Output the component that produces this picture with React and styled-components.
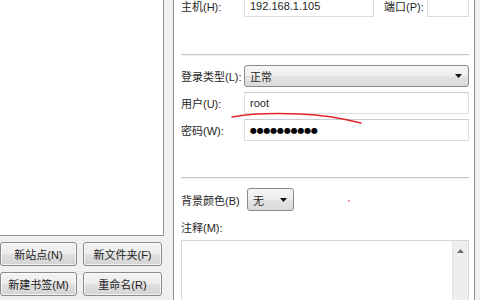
import React from "react";
import styled, { createGlobalStyle } from "styled-components";

const GlobalStyle = createGlobalStyle`
  html, body {
    margin: 0;
    padding: 0;
    background: #f0f0f0;
  }
  * {
    box-sizing: border-box;
  }
`;

const Page = styled.div`
  position: relative;
  display: flex;
  width: 480px;
  height: 300px;
  overflow: hidden;
  background: #f0f0f0;
  font-family: "Liberation Sans", "Noto Sans CJK SC", sans-serif;
  font-size: 11px;
  color: #1e1e1e;
`;

const LeftCol = styled.div`
  display: flex;
  flex-direction: column;
  width: 164px;
  flex-shrink: 0;
`;

const Tree = styled.div`
  height: 236px;
  flex-shrink: 0;
  background: #fff;
  border-right: 1px solid #8e9196;
  border-bottom: 1px solid #8e9196;
`;

const ButtonGrid = styled.div`
  display: grid;
  grid-template-columns: 77px 79px;
  grid-auto-rows: 24px;
  column-gap: 6px;
  row-gap: 6px;
  margin-top: 6px;
`;

const Btn = styled.button`
  font: inherit;
  color: #1e1e1e;
  padding: 0;
  border: 1px solid #8a8a8a;
  border-radius: 3px;
  background: linear-gradient(#f4f4f4 0%, #ececec 48%, #dfdfdf 52%, #d4d4d4 100%);
  box-shadow: inset 0 0 0 1px rgba(255, 255, 255, 0.7);
`;

const TabPage = styled.div`
  display: flex;
  flex-direction: column;
  width: 302px;
  flex-shrink: 0;
  margin-left: 9px;
  padding: 0 5px 0 7px;
  background: #fff;
  border-left: 1px solid #8e9196;
  border-right: 1px solid #8e9196;

  > * {
    flex-shrink: 0;
  }
`;

const Row = styled.div`
  display: flex;
  align-items: center;
  height: ${({ h }) => h || 22}px;
  margin-top: ${({ mt }) => mt || 0}px;
`;

const Label = styled.span`
  width: ${({ w }) => w || 63}px;
  margin-left: ${({ ml }) => ml || 0}px;
  flex-shrink: 0;
  white-space: nowrap;
`;

const Field = styled.div`
  display: flex;
  align-items: center;
  height: 100%;
  width: ${({ w }) => (w ? `${w}px` : "auto")};
  flex: ${({ w }) => (w ? "none" : 1)};
  padding-left: 5px;
  background: #fff;
  border: 1px solid #d9dde3;
  border-top-color: #c9ced6;
  white-space: nowrap;
`;

const Dots = styled.span`
  font-family: "DejaVu Sans", sans-serif;
  font-size: 8px;
  letter-spacing: -0.2px;
  color: #000;
`;

const Combo = styled.div`
  display: flex;
  align-items: center;
  justify-content: space-between;
  height: 100%;
  width: ${({ w }) => (w ? `${w}px` : "auto")};
  flex: ${({ w }) => (w ? "none" : 1)};
  padding: 0 5px;
  border: 1px solid #8a8a8a;
  border-radius: 3px;
  background: linear-gradient(#f5f5f5 0%, #efefef 48%, #e4e4e4 52%, #dadada 100%);
`;

const Arrow = styled.svg`
  width: 7px;
  height: 4px;
  margin-right: 1px;
`;

const Separator = styled.div`
  height: 2px;
  margin-top: ${({ mt }) => mt}px;
  border-top: 1px solid #c5c5c5;
  border-bottom: 1px solid #f4f4f4;
`;

const CommentLabel = styled.div`
  margin-top: 10px;
  line-height: 14px;
`;

const TextArea = styled.div`
  display: flex;
  justify-content: flex-end;
  height: 80px;
  margin-top: 5px;
  background: #fff;
  border: 1px solid #d4d7dc;
`;

const ScrollBar = styled.div`
  display: flex;
  justify-content: center;
  width: 16px;
  padding-top: 8px;
  background: #eeeeee;
  border-left: 1px solid #e4e4e4;
`;

const Overlay = styled.svg`
  position: absolute;
  left: 0;
  top: 0;
  width: 480px;
  height: 300px;
  pointer-events: none;
`;

function DownArrow() {
  return (
    <Arrow viewBox="0 0 7 4">
      <path d="M0 0H7L3.5 4Z" fill="#111" />
    </Arrow>
  );
}

export default function App() {
  return (
    <>
      <GlobalStyle />
      <Page>
        <LeftCol>
          <Tree />
          <ButtonGrid>
            <Btn>新站点(N)</Btn>
            <Btn>新文件夹(F)</Btn>
            <Btn>新建书签(M)</Btn>
            <Btn>重命名(R)</Btn>
          </ButtonGrid>
        </LeftCol>

        <TabPage>
          <Row mt={-5}>
            <Label>主机(H):</Label>
            <Field w={130}>192.168.1.105</Field>
            <Label w={43} ml={10}>端口(P):</Label>
            <Field />
          </Row>

          <Separator mt={37} />

          <Row mt={9}>
            <Label>登录类型(L):</Label>
            <Combo>
              正常
              <DownArrow />
            </Combo>
          </Row>

          <Row mt={5}>
            <Label>用户(U):</Label>
            <Field>root</Field>
          </Row>

          <Row mt={5}>
            <Label>密码(W):</Label>
            <Field>
              <Dots>●●●●●●●●●●</Dots>
            </Field>
          </Row>

          <Separator mt={36} />

          <Row mt={9} h={23}>
            <Label w={66}>背景颜色(B)</Label>
            <Combo w={47}>
              无
              <DownArrow />
            </Combo>
          </Row>

          <CommentLabel>注释(M):</CommentLabel>
          <TextArea>
            <ScrollBar>
              <svg width="7" height="4" viewBox="0 0 7 4">
                <path d="M0 4H7L3.5 0Z" fill="#6e6e6e" />
              </svg>
            </ScrollBar>
          </TextArea>
        </TabPage>

        <Overlay viewBox="0 0 480 300">
          <path
            d="M232 117 C 248 114, 275 113, 300 114 S 345 119, 361 123"
            fill="none"
            stroke="#e3262b"
            strokeWidth="1.4"
            strokeLinecap="round"
          />
          <circle cx="349" cy="201" r="1" fill="#f07a7a" />
        </Overlay>
      </Page>
    </>
  );
}
